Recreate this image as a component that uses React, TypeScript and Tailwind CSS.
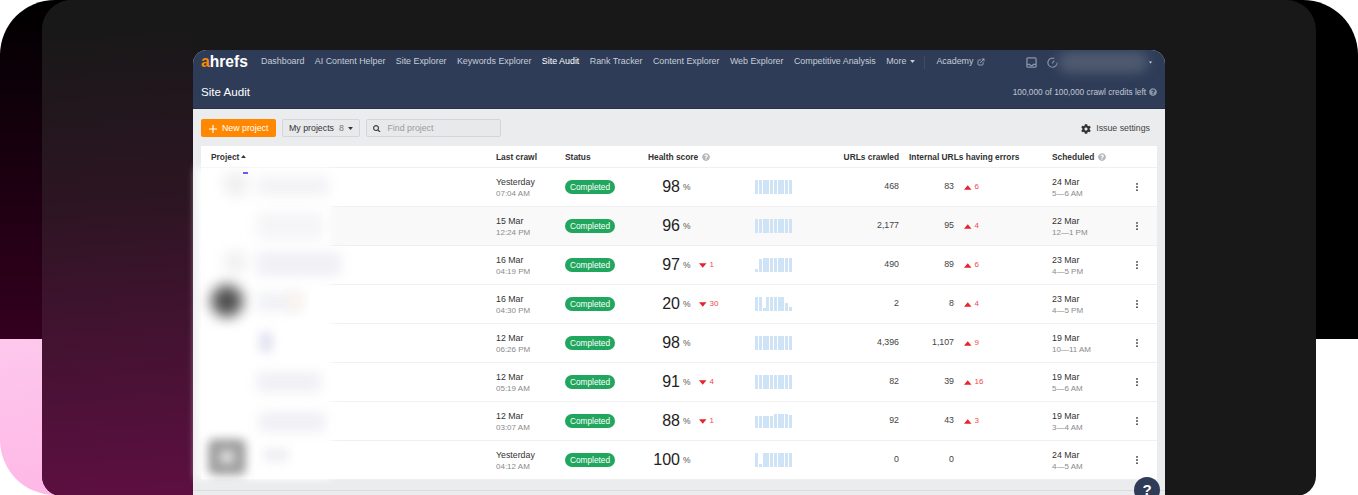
import { FC } from "react";
import { FaCog, FaQuestionCircle, FaSearch } from "react-icons/fa";
import { BsThreeDotsVertical } from "react-icons/bs";
import { FiExternalLink } from "react-icons/fi";

type Row = {
  date: string;
  time: string;
  score: number;
  drop?: number;
  bars: number[];
  urls: string;
  errors: string;
  rise?: number;
  next: string;
  slot: string;
  tinted?: boolean;
};

const full = [12, 12, 12, 12, 12, 12, 12, 12, 12, 12];

const rows: Row[] = [
  { date: "Yesterday", time: "07:04 AM", score: 98, bars: full, urls: "468", errors: "83", rise: 6, next: "24 Mar", slot: "5—6 AM" },
  { date: "15 Mar", time: "12:24 PM", score: 96, bars: full, urls: "2,177", errors: "95", rise: 4, next: "22 Mar", slot: "12—1 PM", tinted: true },
  { date: "16 Mar", time: "04:19 PM", score: 97, drop: 1, bars: [1, 11, 12, 12, 12, 12, 12, 12, 12, 12], urls: "490", errors: "89", rise: 6, next: "23 Mar", slot: "4—5 PM" },
  { date: "16 Mar", time: "04:30 PM", score: 20, drop: 30, bars: [12, 12, 1, 12, 12, 12, 12, 12, 6, 2], urls: "2", errors: "8", rise: 4, next: "23 Mar", slot: "4—5 PM" },
  { date: "12 Mar", time: "06:26 PM", score: 98, bars: full, urls: "4,396", errors: "1,107", rise: 9, next: "19 Mar", slot: "10—11 AM" },
  { date: "12 Mar", time: "05:19 AM", score: 91, drop: 4, bars: full, urls: "82", errors: "39", rise: 16, next: "19 Mar", slot: "5—6 AM" },
  { date: "12 Mar", time: "03:07 AM", score: 88, drop: 1, bars: [10, 10, 10, 10, 10, 12, 12, 12, 12, 11], urls: "92", errors: "43", rise: 3, next: "19 Mar", slot: "3—4 AM" },
  { date: "Yesterday", time: "04:12 AM", score: 100, bars: [12, 1, 12, 12, 12, 12, 12, 12, 12, 12], urls: "0", errors: "0", next: "24 Mar", slot: "4—5 AM" },
];

const navItems = [
  "Dashboard",
  "AI Content Helper",
  "Site Explorer",
  "Keywords Explorer",
  "Site Audit",
  "Rank Tracker",
  "Content Explorer",
  "Web Explorer",
  "Competitive Analysis",
];

const gridCols = "grid grid-cols-[295px_69px_83px_107px_45px_99px_153px_73px_32px] items-center";

const Caret: FC<{ up?: boolean; className?: string }> = ({ up, className }) => (
  <svg viewBox="0 0 8 5" className={className} fill="currentColor">
    {up ? <path d="M4 0l4 5H0z" /> : <path d="M0 0h8L4 5z" />}
  </svg>
);

const Spark: FC<{ bars: number[] }> = ({ bars }) => (
  <div className="flex h-[14px] items-end gap-[0.75px]">
    {bars.map((h, i) => (
      <div key={i} className="w-[3px] bg-[#cfe3f7]" style={{ height: h + 2 }} />
    ))}
  </div>
);

const ProjectRow: FC<{ row: Row }> = ({ row }) => (
  <div className={`${gridCols} h-[39px] border-b border-[#f0f0f1] ${row.tinted ? "bg-[#f9f9f9]" : "bg-white"}`}>
    <div />
    <div>
      <div className="text-[8.8px] leading-[12px] text-[#333]">{row.date}</div>
      <div className="text-[8px] leading-[11px] text-[#8a8a8a]">{row.time}</div>
    </div>
    <div>
      <span className="flex h-[14px] w-[50px] items-center justify-center rounded-full bg-[#21a65e] text-[8.3px] text-white">
        Completed
      </span>
    </div>
    <div className="flex items-center">
      <span className="w-[32px] text-right text-[16px] leading-none text-[#222]">{row.score}</span>
      <span className="w-[19px] pl-[3px] text-[8.5px] text-[#555]">%</span>
      {row.drop !== undefined && (
        <span className="flex items-center gap-[3px] text-[8px] text-[#f04a4a]">
          <Caret className="h-[5px] w-[7.5px] text-[#e8212b]" />
          {row.drop}
        </span>
      )}
    </div>
    <Spark bars={row.bars} />
    <div className="text-right text-[8.8px] text-[#444]">{row.urls}</div>
    <div className="flex items-center">
      <span className="w-[55px] text-right text-[8.8px] text-[#444]">{row.errors}</span>
      {row.rise !== undefined && (
        <span className="ml-[10px] flex items-center gap-[3px] text-[8px] text-[#f04a4a]">
          <Caret up className="h-[5px] w-[7.5px] text-[#e8212b]" />
          {row.rise}
        </span>
      )}
    </div>
    <div>
      <div className="text-[8.8px] leading-[12px] text-[#333]">{row.next}</div>
      <div className="text-[8px] leading-[11px] text-[#8a8a8a]">{row.slot}</div>
    </div>
    <div className="pl-[7px] text-[#444]">
      <BsThreeDotsVertical size={10} />
    </div>
  </div>
);

// 表のプロジェクト列にかかっているぼかし
const Smudges: FC = () => (
  <div className="pointer-events-none absolute -left-[4px] top-0 h-[312px] w-[150px]">
    <div className="absolute left-0 top-0 h-[311px] w-[134px] bg-white blur-[4px]" />
    <div className="absolute left-[26px] top-[3px] h-[26px] w-[26px] rounded-full bg-[#efefef] blur-[7px]" />
    <div className="absolute left-[60px] top-[8px] h-[20px] w-[72px] bg-[#f3f3f6] blur-[6px]" />
    <div className="absolute left-[60px] top-[44px] h-[28px] w-[66px] bg-[#f5f5f7] blur-[6px]" />
    <div className="absolute left-[26px] top-[82px] h-[24px] w-[24px] rounded-full bg-[#f0f0f0] blur-[7px]" />
    <div className="absolute left-[60px] top-[84px] h-[24px] w-[84px] bg-[#f0f0f5] blur-[6px]" />
    <div className="absolute left-[14px] top-[117px] h-[32px] w-[32px] rounded-full bg-[#505050] blur-[7px]" />
    <div className="absolute left-[60px] top-[124px] h-[20px] w-[42px] bg-[#f1f2f5] blur-[6px]" />
    <div className="absolute left-[92px] top-[124px] h-[18px] w-[14px] bg-[#fbf3ee] blur-[5px]" />
    <div className="absolute left-[62px] top-[164px] h-[20px] w-[14px] bg-[#e3e5f1] blur-[5px]" />
    <div className="absolute left-[60px] top-[204px] h-[20px] w-[64px] bg-[#f0f0f5] blur-[6px]" />
    <div className="absolute left-[62px] top-[244px] h-[20px] w-[66px] bg-[#f0f0f5] blur-[6px]" />
    <div className="absolute left-[11px] top-[271px] h-[36px] w-[38px] rounded-[6px] bg-[#a0a0a0] blur-[5px]" />
    <div className="absolute left-[22px] top-[282px] h-[14px] w-[16px] rounded-full bg-[#dadada] blur-[5px]" />
    <div className="absolute left-[66px] top-[280px] h-[14px] w-[26px] bg-[#f0f0f4] blur-[5px]" />
    <div className="absolute left-[46px] top-[4px] h-[2px] w-[5px] bg-[#6b5cf0]" />
  </div>
);

const TableHead: FC = () => (
  <div className={`${gridCols} h-[22px] border-b border-[#f0f0f1] bg-white pt-[1px] text-[8.4px] font-bold text-[#333]`}>
    <div className="flex items-center gap-[2px] pl-[10px]">
      Project
      <Caret up className="h-[3px] w-[5px]" />
    </div>
    <div>Last crawl</div>
    <div>Status</div>
    <div className="flex items-center gap-[4px]">
      Health score
      <FaQuestionCircle size={8} className="text-[#b4b6ba]" />
    </div>
    <div />
    <div className="text-right">URLs crawled</div>
    <div className="pl-[10px]">Internal URLs having errors</div>
    <div className="col-span-2 flex items-center gap-[4px]">
      Scheduled
      <FaQuestionCircle size={8} className="text-[#b4b6ba]" />
    </div>
  </div>
);

const Header: FC = () => (
  <header className="h-[59px] shrink-0 border-b border-[#26324a] bg-[#2e3c58] px-[8px]">
    <div className="flex h-[23px] items-center pt-[1px]">
      <div className="w-[60px] text-[15.6px] font-bold leading-none text-white">
        <span className="text-[#ff8800]">a</span>hrefs
      </div>
      <nav className="flex items-center gap-[10.4px] text-[8.9px] text-[#c5cdd9]">
        {navItems.map((item) => (
          <span key={item} className={item === "Site Audit" ? "text-white" : ""}>
            {item}
          </span>
        ))}
        <span className="flex items-center gap-[4px]">
          More
          <Caret className="h-[3px] w-[5px]" />
        </span>
      </nav>
      <div className="ml-[9px] h-[13px] w-px bg-[#3f4c68]" />
      <div className="ml-[11px] flex items-center gap-[4px] text-[8.9px] text-[#c5cdd9]">
        Academy
        <FiExternalLink size={8} />
      </div>
      <div className="relative ml-auto flex w-[131px] items-center text-[#8b95a8]">
        <svg viewBox="0 0 12 12" className="h-[11px] w-[11px]" fill="none" stroke="currentColor" strokeWidth="1.4">
          <rect x="1" y="1" width="10" height="10" rx="1" />
          <path d="M1 8h3l1 1.3h2L8 8h3" />
        </svg>
        <svg viewBox="0 0 12 12" className="ml-[10px] h-[11px] w-[11px]" fill="none" stroke="currentColor" strokeWidth="1.3">
          <path d="M8 1.6A5 5 0 1 0 11 6" />
          <path d="M5.5 7L8 4" />
        </svg>
        <div className="absolute left-[32px] top-[-6px] h-[22px] w-[90px] rounded-full bg-[#4f5a70] blur-[6px]" />
        <Caret className="absolute right-[5px] h-[5px] w-[3px] text-[#d5d8de]" />
      </div>
    </div>
    <div className="mt-[12px] flex items-center justify-between">
      <h1 className="text-[11.6px] leading-[14px] text-white">Site Audit</h1>
      <div className="flex items-center gap-[3px] text-[8.3px] text-[#c0c8d4]">
        100,000 of 100,000 crawl credits left
        <FaQuestionCircle size={8} className="text-[#8b95a8]" />
      </div>
    </div>
  </header>
);

const Toolbar: FC = () => (
  <div className="flex h-[18px] items-center text-[8.8px]">
    <button className="flex h-[18px] w-[75px] items-center rounded-[2px] bg-[#ff8800] pl-[8px] pt-[1px] text-white">
      <svg viewBox="0 0 8 8" className="h-[8px] w-[8px]" stroke="currentColor" strokeWidth="1.2">
        <path d="M4 0v8M0 4h8" />
      </svg>
      <span className="ml-[5px]">New project</span>
    </button>
    <button className="ml-[6px] flex h-[18px] w-[78px] items-center rounded-[2px] border border-[#d3d5d9] bg-[#e8e9eb] pl-[6px] pt-[1px] text-[#333]">
      My projects
      <span className="ml-[5px] text-[#777]">8</span>
      <Caret className="ml-[4px] h-[3px] w-[5px]" />
    </button>
    <div className="ml-[6px] flex h-[18px] w-[135px] items-center rounded-[2px] border border-[#d3d5d9] bg-[#e8e9eb] pl-[6px] pt-[1px] text-[#9a9a9a]">
      <FaSearch size={7.5} className="text-[#444]" />
      <span className="ml-[7px]">Find project</span>
    </div>
    <div className="ml-auto flex items-center gap-[5px] pr-[7px] pt-[1px] text-[#444]">
      <FaCog size={10} className="text-[#333]" />
      Issue settings
    </div>
  </div>
);

export default function App() {
  return (
    <div className="grid h-[495px] w-[1358px] overflow-hidden bg-white font-['Liberation_Sans',Arial,sans-serif]">
      {/* 背面のプレート */}
      <div className="col-start-1 row-start-1 flex h-[495px]">
        <div className="flex w-1/2 flex-col overflow-hidden rounded-l-[55px]">
          <div className="h-[339px] bg-[linear-gradient(180deg,#000000,#34001f)]" />
          <div className="flex-1 bg-[linear-gradient(170deg,#fdc8ec,#ffade3)]" />
        </div>
        <div className="w-1/2">
          <div className="h-[339px] rounded-tr-[55px] bg-black" />
        </div>
      </div>

      {/* 本体 */}
      <div className="col-start-1 row-start-1 mx-[42px] flex h-[496px] overflow-hidden rounded-t-[30px] rounded-b-[20px] bg-[#181818]">
        <div className="w-[151px] shrink-0 bg-[linear-gradient(176deg,#181818_6%,#2c1522_40%,#5e0f42_100%)]" />
        <div className="relative mt-[50px] flex w-[972px] shrink-0 flex-col rounded-t-[14px] bg-[#ebecee]">
          <div className="overflow-hidden rounded-t-[14px]">
            <Header />
          </div>
          <div className="px-[8px] pt-[10px]">
            <Toolbar />
            <div className="mt-[9px]">
              <TableHead />
              <div className="relative">
                {rows.map((row, i) => (
                  <ProjectRow key={i} row={row} />
                ))}
                <Smudges />
              </div>
            </div>
          </div>
          <div className="mt-[10px] h-px bg-[#dcdde0]" />
          <button className="absolute left-[941px] top-[427px] flex h-[26px] w-[26px] items-center justify-center rounded-full bg-[#2e3c58] text-[15px] font-bold text-white">
            ?
          </button>
        </div>
      </div>
    </div>
  );
}
